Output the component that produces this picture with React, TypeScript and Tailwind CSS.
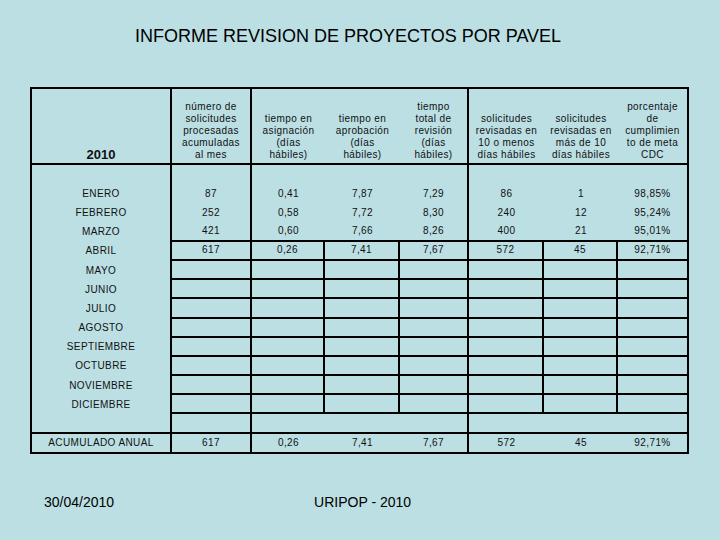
import { ReactNode } from 'react'

const headers: ReactNode[] = [
  <span className="text-[13px] font-bold tracking-normal">2010</span>,
  <>número de<br />solicitudes<br />procesadas<br />acumuladas<br />al mes</>,
  <>tiempo en<br />asignación<br />(días<br />hábiles)</>,
  <>tiempo en<br />aprobación<br />(días<br />hábiles)</>,
  <>tiempo<br />total de<br />revisión<br />(días<br />hábiles)</>,
  <>solicitudes<br />revisadas en<br />10 o menos<br />días hábiles</>,
  <>solicitudes<br />revisadas en<br />más de 10<br />días hábiles</>,
  <>porcentaje<br />de<br />cumplimien<br />to de meta<br />CDC</>,
]

const body: string[][] = [
  [],
  ['ENERO', '87', '0,41', '7,87', '7,29', '86', '1', '98,85%'],
  ['FEBRERO', '252', '0,58', '7,72', '8,30', '240', '12', '95,24%'],
  ['MARZO', '421', '0,60', '7,66', '8,26', '400', '21', '95,01%'],
  ['ABRIL', '617', '0,26', '7,41', '7,67', '572', '45', '92,71%'],
  ['MAYO'],
  ['JUNIO'],
  ['JULIO'],
  ['AGOSTO'],
  ['SEPTIEMBRE'],
  ['OCTUBRE'],
  ['NOVIEMBRE'],
  ['DICIEMBRE'],
  [],
  ['ACUMULADO ANUAL', '617', '0,26', '7,41', '7,67', '572', '45', '92,71%'],
]

// which grid lines are drawn: the sheet has an irregular border layout
function hasRight(r: number, c: number) {
  if (c === 0 || c === 1 || c === 4) return true
  if (c === 7) return false
  return r >= 5 && r <= 13
}

function hasBottom(r: number, c: number) {
  if (r === 0 || r === 14) return true
  return r >= 4 && r <= 13 && c >= 1
}

function cx(...parts: string[]) {
  return parts.filter(Boolean).join(' ')
}

function Cell({ r, c, children }: { r: number; c: number; children?: ReactNode }) {
  return (
    <div
      className={cx(
        'flex justify-center text-center border-black',
        r === 0 ? 'items-end pb-[2px] leading-[12px]' : 'items-center leading-none',
        hasRight(r, c) ? 'border-r-2' : '',
        hasBottom(r, c) ? 'border-b-2' : '',
      )}
    >
      {children}
    </div>
  )
}

export default function App() {
  return (
    <div className="h-[540px] w-[720px] overflow-hidden bg-[#bbdfe3] font-['Liberation_Sans',Arial,sans-serif] text-[#111]">
      <div className="pl-[135px] pt-[25px] text-[18px] leading-[22px] text-black">
        INFORME REVISION DE PROYECTOS POR PAVEL
      </div>

      <div className="ml-[30px] mt-[40px] w-[659px] border-2 border-black">
        <div className="grid grid-cols-[140px_80px_73px_75px_69px_75px_74px_69px] grid-rows-[76px_repeat(14,19.2px)_18px] text-[10px] tracking-[0.4px]">
          {headers.map((h, c) => (
            <Cell key={'h' + c} r={0} c={c}>
              {h}
            </Cell>
          ))}
          {body.map((row, i) =>
            Array.from({ length: 8 }).map((_, c) => (
              <Cell key={i + '-' + c} r={i + 1} c={c}>
                {row[c] ?? ''}
              </Cell>
            )),
          )}
        </div>
      </div>

      <div className="mt-[40px] flex text-[14px] leading-[16px] text-black">
        <span className="ml-[44px]">30/04/2010</span>
        <span className="ml-[200px]">URIPOP - 2010</span>
      </div>
    </div>
  )
}
